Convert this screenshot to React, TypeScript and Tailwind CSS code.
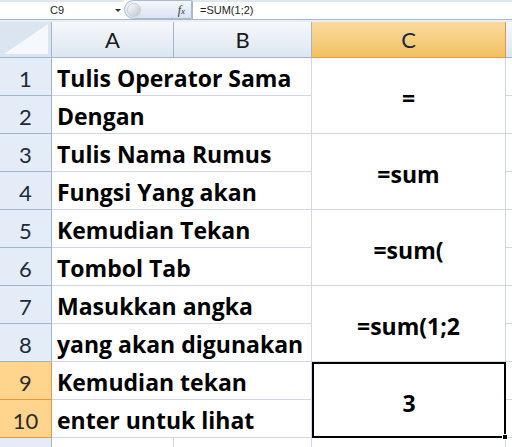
import React from "react"

const rows: { a: string }[] = [
  { a: "Tulis Operator Sama" },
  { a: "Dengan" },
  { a: "Tulis Nama Rumus" },
  { a: "Fungsi Yang akan" },
  { a: "Kemudian Tekan" },
  { a: "Tombol Tab" },
  { a: "Masukkan angka" },
  { a: "yang akan digunakan" },
  { a: "Kemudian tekan" },
  { a: "enter untuk lihat" },
]

const cValues = ["=", "=sum", "=sum(", "=sum(1;2", "3"]

const font = { fontFamily: "Lato, 'Open Sans', sans-serif" }
const cellFont = { fontFamily: "'Open Sans', Lato, sans-serif" }

function FormulaBar() {
  return (
    <div className="flex h-[20px] border-b border-[#a5b9d1] bg-white text-[11px] text-[#1e1e1e]" style={{ fontFamily: "'Liberation Sans', Arial, sans-serif" }}>
      <div className="relative flex w-[124px] items-center border-t-2 border-[#dfe7f1]">
        <span className="w-[114px] text-center">C9</span>
        <span className="absolute left-[115px] top-[7px] h-0 w-0 border-x-[3px] border-t-[3px] border-x-transparent border-t-[#333]" />
      </div>
      <div className="flex w-[68px] items-center rounded-l-full border border-[#a5b9d1] bg-gradient-to-b from-[#f4f7fb] to-[#dbe4ef]">
        <span className="ml-[2px] h-[14px] w-[14px] rounded-full bg-gradient-to-br from-[#ffffff] to-[#b9c4d1] border border-[#c5cfdb]" />
        <span className="ml-auto mr-[6px] text-[12px] italic text-[#333]" style={{ fontFamily: "'Liberation Serif', serif" }}>
          f<span className="text-[9px]">x</span>
        </span>
      </div>
      <div className="flex flex-1 items-center border-l border-[#a5b9d1] pl-[7px] border-t-2 border-t-[#dfe7f1]">=SUM(1;2)</div>
    </div>
  )
}

export default function App() {
  return (
    <div className="h-[447px] w-[512px] overflow-hidden bg-white" style={font}>
      <FormulaBar />
      <div className="h-[2px] bg-[#e9eef5]" />
      <div className="grid grid-cols-[52px_122px_138px_194px_1fr] grid-rows-[36px_repeat(10,38px)_20px]">
        {/* header row */}
        <div className="relative border-b border-r border-[#9eb6ce] bg-[#dbe5f1]">
          <div className="absolute bottom-[3px] right-[3px] h-0 w-0 border-b-[30px] border-l-[44px] border-b-[#f5f8fc] border-l-transparent" />
        </div>
        <div className="flex items-center justify-center border-b border-r border-[#9eb6ce] bg-gradient-to-b from-[#f6f8fb] to-[#dde6f0] text-[22px] text-[#1a1a1a]">A</div>
        <div className="flex items-center justify-center border-b border-r border-[#9eb6ce] bg-gradient-to-b from-[#f6f8fb] to-[#dde6f0] text-[22px] text-[#1a1a1a]">B</div>
        <div className="flex items-center justify-center border-b border-r border-[#f29536] bg-gradient-to-b from-[#f9dba0] to-[#f1c15f] text-[22px] text-[#1a2a3a]">C</div>
        <div className="border-b border-[#9eb6ce] bg-gradient-to-b from-[#f6f8fb] to-[#dde6f0]" />

        {rows.map((r, i) => {
          const sel = i >= 8
          return (
            <React.Fragment key={i}>
              <div
                className={
                  sel
                    ? "flex items-center justify-center border-b border-r border-[#f29536] bg-[#ffd58d] pt-[4px] text-[22px] text-[#2a2a2a]"
                    : "flex items-center justify-center border-b border-r border-[#9eb6ce] bg-[#e4ecf7] pt-[4px] text-[22px] text-[#1a2a3a]"
                }
                style={{ gridRow: i + 2, gridColumn: 1 }}
              >
                {i + 1}
              </div>
              <div
                className="flex items-center whitespace-nowrap border-b border-r border-[#d0d7e5] pl-[5px] pt-[3px] text-[23px] font-bold text-black"
                style={{ ...cellFont, gridRow: i + 2, gridColumn: "2 / span 2" }}
              >
                {r.a}
              </div>
              <div className="border-b border-[#d0d7e5]" style={{ gridRow: i + 2, gridColumn: 5 }} />
            </React.Fragment>
          )
        })}

        {cValues.map((v, k) => {
          const sel = k === 4
          return (
            <div
              key={k}
              className={
                sel
                  ? "relative flex items-center justify-center border-2 border-black pt-[6px] text-[23px] font-bold text-black"
                  : "flex items-center justify-center border-b border-r border-[#d0d7e5] pt-[6px] text-[23px] font-bold text-black"
              }
              style={{ ...cellFont, gridRow: `${k * 2 + 2} / span 2`, gridColumn: 4 }}
            >
              {v}
              {sel && <span className="absolute -bottom-[4px] -right-[4px] h-[6px] w-[6px] border border-white bg-black" />}
            </div>
          )
        })}

        {/* partial next row */}
        <div className="border-r border-[#9eb6ce] bg-[#e4ecf7]" style={{ gridRow: 12, gridColumn: 1 }} />
        <div className="border-r border-[#d0d7e5]" style={{ gridRow: 12, gridColumn: 2 }} />
        <div className="border-r border-[#d0d7e5]" style={{ gridRow: 12, gridColumn: 3 }} />
        <div className="border-r border-[#d0d7e5]" style={{ gridRow: 12, gridColumn: 4 }} />
      </div>
    </div>
  )
}
